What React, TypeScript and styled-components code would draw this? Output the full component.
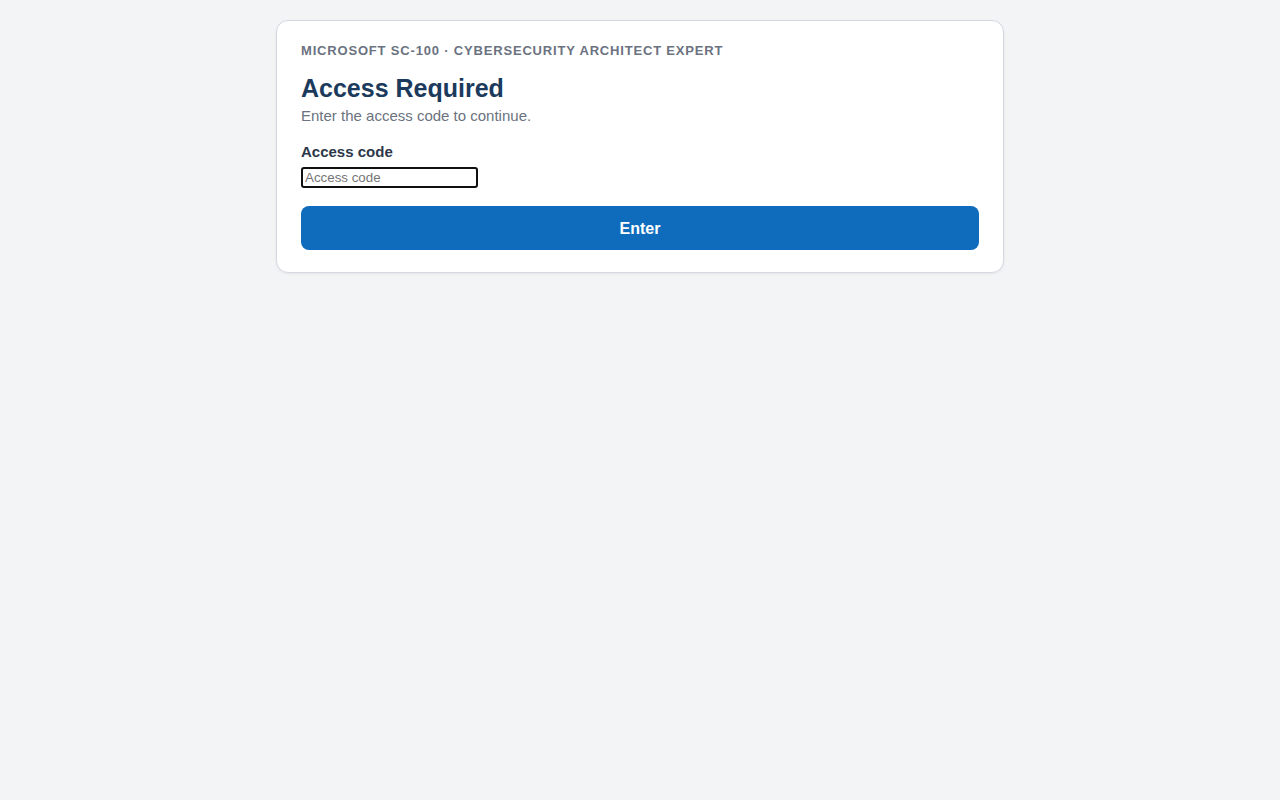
import React from "react";
import styled, { createGlobalStyle } from "styled-components";

const GlobalStyle = createGlobalStyle`
  html, body {
    margin: 0;
    padding: 0;
    background: #f3f4f6;
    font-family: "Liberation Sans", Arial, sans-serif;
  }
`;

const Page = styled.main`
  min-height: 100vh;
  box-sizing: border-box;
  padding: 20px 16px;
  display: flex;
  justify-content: center;
  align-items: flex-start;
`;

const Card = styled.section`
  width: 728px;
  box-sizing: border-box;
  background: #ffffff;
  border: 1px solid #d6d8e0;
  border-radius: 12px;
  box-shadow: 0 1px 3px rgba(17, 24, 39, 0.06);
  padding: 22px 24px 22px;
  display: flex;
  flex-direction: column;
`;

const Eyebrow = styled.div`
  font-size: 13px;
  line-height: 15px;
  font-weight: 700;
  letter-spacing: 0.82px;
  text-transform: uppercase;
  color: #6b7280;
`;

const Title = styled.h1`
  margin: 15px 0 0;
  font-size: 25px;
  line-height: 30px;
  font-weight: 700;
  color: #1b3a5c;
`;

const Subtitle = styled.p`
  margin: 4px 0 0;
  font-size: 15px;
  line-height: 17px;
  color: #6b7280;
`;

const Form = styled.form`
  display: flex;
  flex-direction: column;
  align-items: flex-start;
  margin-top: 19px;
`;

const Label = styled.label`
  font-size: 15px;
  line-height: 17px;
  font-weight: 700;
  color: #2d3748;
  margin-bottom: 7px;
`;

const Input = styled.input`
  width: 177px;
  box-sizing: border-box;
  font-family: "Liberation Sans", Arial, sans-serif;
  font-size: 13.333px;
`;

const Button = styled.button`
  align-self: stretch;
  margin-top: 18px;
  height: 44px;
  padding: 2px 0 0;
  border: none;
  border-radius: 8px;
  background: #0f6cbd;
  color: #ffffff;
  font-family: "Liberation Sans", Arial, sans-serif;
  font-size: 16px;
  font-weight: 700;
  cursor: pointer;
`;

export default function App() {
  return (
    <>
      <GlobalStyle />
      <Page>
        <Card>
          <Eyebrow>Microsoft SC-100 · Cybersecurity Architect Expert</Eyebrow>
          <Title>Access Required</Title>
          <Subtitle>Enter the access code to continue.</Subtitle>
          <Form onSubmit={(e) => e.preventDefault()}>
            <Label htmlFor="code">Access code</Label>
            <Input id="code" type="password" placeholder="Access code" autoFocus />
            <Button type="submit">Enter</Button>
          </Form>
        </Card>
      </Page>
    </>
  );
}
